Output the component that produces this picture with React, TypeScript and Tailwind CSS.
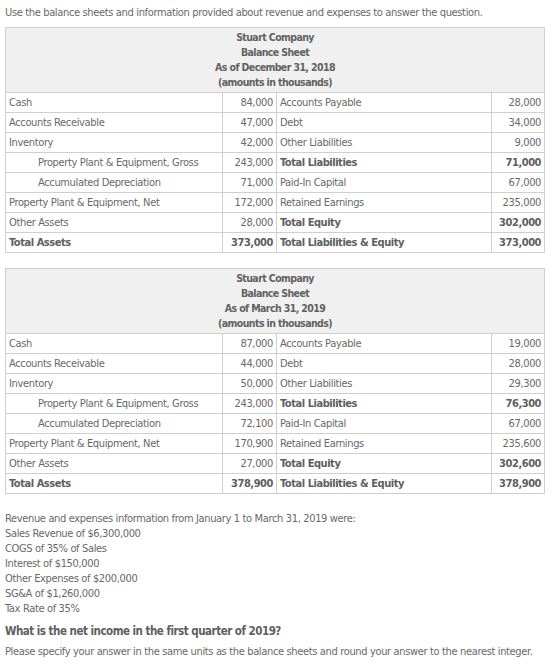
const font = { fontFamily: '"DejaVu Sans Condensed", "DejaVu Sans", sans-serif' };

type Row = { a: string; av: string; l: string; lv: string; indent?: boolean; aBold?: boolean; lBold?: boolean };

const sheet2018: Row[] = [
  { a: "Cash", av: "84,000", l: "Accounts Payable", lv: "28,000" },
  { a: "Accounts Receivable", av: "47,000", l: "Debt", lv: "34,000" },
  { a: "Inventory", av: "42,000", l: "Other Liabilities", lv: "9,000" },
  { a: "Property Plant & Equipment, Gross", av: "243,000", l: "Total Liabilities", lv: "71,000", indent: true, lBold: true },
  { a: "Accumulated Depreciation", av: "71,000", l: "Paid-In Capital", lv: "67,000", indent: true },
  { a: "Property Plant & Equipment, Net", av: "172,000", l: "Retained Earnings", lv: "235,000" },
  { a: "Other Assets", av: "28,000", l: "Total Equity", lv: "302,000", lBold: true },
  { a: "Total Assets", av: "373,000", l: "Total Liabilities & Equity", lv: "373,000", aBold: true, lBold: true },
];

const sheet2019: Row[] = [
  { a: "Cash", av: "87,000", l: "Accounts Payable", lv: "19,000" },
  { a: "Accounts Receivable", av: "44,000", l: "Debt", lv: "28,000" },
  { a: "Inventory", av: "50,000", l: "Other Liabilities", lv: "29,300" },
  { a: "Property Plant & Equipment, Gross", av: "243,000", l: "Total Liabilities", lv: "76,300", indent: true, lBold: true },
  { a: "Accumulated Depreciation", av: "72,100", l: "Paid-In Capital", lv: "67,000", indent: true },
  { a: "Property Plant & Equipment, Net", av: "170,900", l: "Retained Earnings", lv: "235,600" },
  { a: "Other Assets", av: "27,000", l: "Total Equity", lv: "302,600", lBold: true },
  { a: "Total Assets", av: "378,900", l: "Total Liabilities & Equity", lv: "378,900", aBold: true, lBold: true },
];

const bold = "font-bold text-[#5e5e5e] tracking-[-0.45px]";

function Sheet({ date, rows }: { date: string; rows: Row[] }) {
  const cell = "border border-[#cfcfcf] h-[20px] px-[3px] py-0 leading-[18px] whitespace-nowrap";
  return (
    <table className="border-collapse table-fixed w-[539px] ml-[5px] text-[11px] text-[#686868] tracking-[-0.35px]">
      <colgroup>
        <col className="w-[217px]" />
        <col className="w-[54px]" />
        <col className="w-[215px]" />
        <col className="w-[53px]" />
      </colgroup>
      <tbody>
        <tr>
          <td colSpan={4} className="border border-[#cfcfcf] bg-[#f0f0f0] text-center font-bold text-[10.5px] tracking-[-0.6px] text-[#616161] leading-[15px] py-[2px]">
            <div>Stuart Company</div>
            <div>Balance Sheet</div>
            <div>{date}</div>
            <div>(amounts in thousands)</div>
          </td>
        </tr>
        {rows.map((r) => (
          <tr key={r.a}>
            <td className={`${cell} ${r.indent ? "pl-[32px]" : ""} ${r.aBold ? bold : ""}`}>{r.a}</td>
            <td className={`${cell} text-right ${r.aBold ? bold : ""}`}>{r.av}</td>
            <td className={`${cell} ${r.lBold ? bold : ""}`}>{r.l}</td>
            <td className={`${cell} text-right ${r.lBold ? bold : ""}`}>{r.lv}</td>
          </tr>
        ))}
      </tbody>
    </table>
  );
}

export default function App() {
  return (
    <div className="w-[560px] h-[672px] bg-white text-[#686868] text-[11px] leading-[15px] tracking-[-0.35px]" style={font}>
      <p className="pt-[5px] pl-[5px] mb-[7px]">
        Use the balance sheets and information provided about revenue and expenses to answer the question.
      </p>
      <Sheet date="As of December 31, 2018" rows={sheet2018} />
      <div className="h-[15px]" />
      <Sheet date="As of March 31, 2019" rows={sheet2019} />
      <div className="pl-[5px] pt-[17px]">
        <div>Revenue and expenses information from January 1 to March 31, 2019 were:</div>
        <div>Sales Revenue of $6,300,000</div>
        <div>COGS of 35% of Sales</div>
        <div>Interest of $150,000</div>
        <div>Other Expenses of $200,000</div>
        <div>SG&amp;A of $1,260,000</div>
        <div>Tax Rate of 35%</div>
        <div className="mt-[7px] font-bold text-[11.5px] tracking-[-0.5px] text-[#5e5e5e] leading-[16px]">What is the net income in the first quarter of 2019?</div>
        <div className="mt-[5px]">Please specify your answer in the same units as the balance sheets and round your answer to the nearest integer.</div>
      </div>
    </div>
  );
}
